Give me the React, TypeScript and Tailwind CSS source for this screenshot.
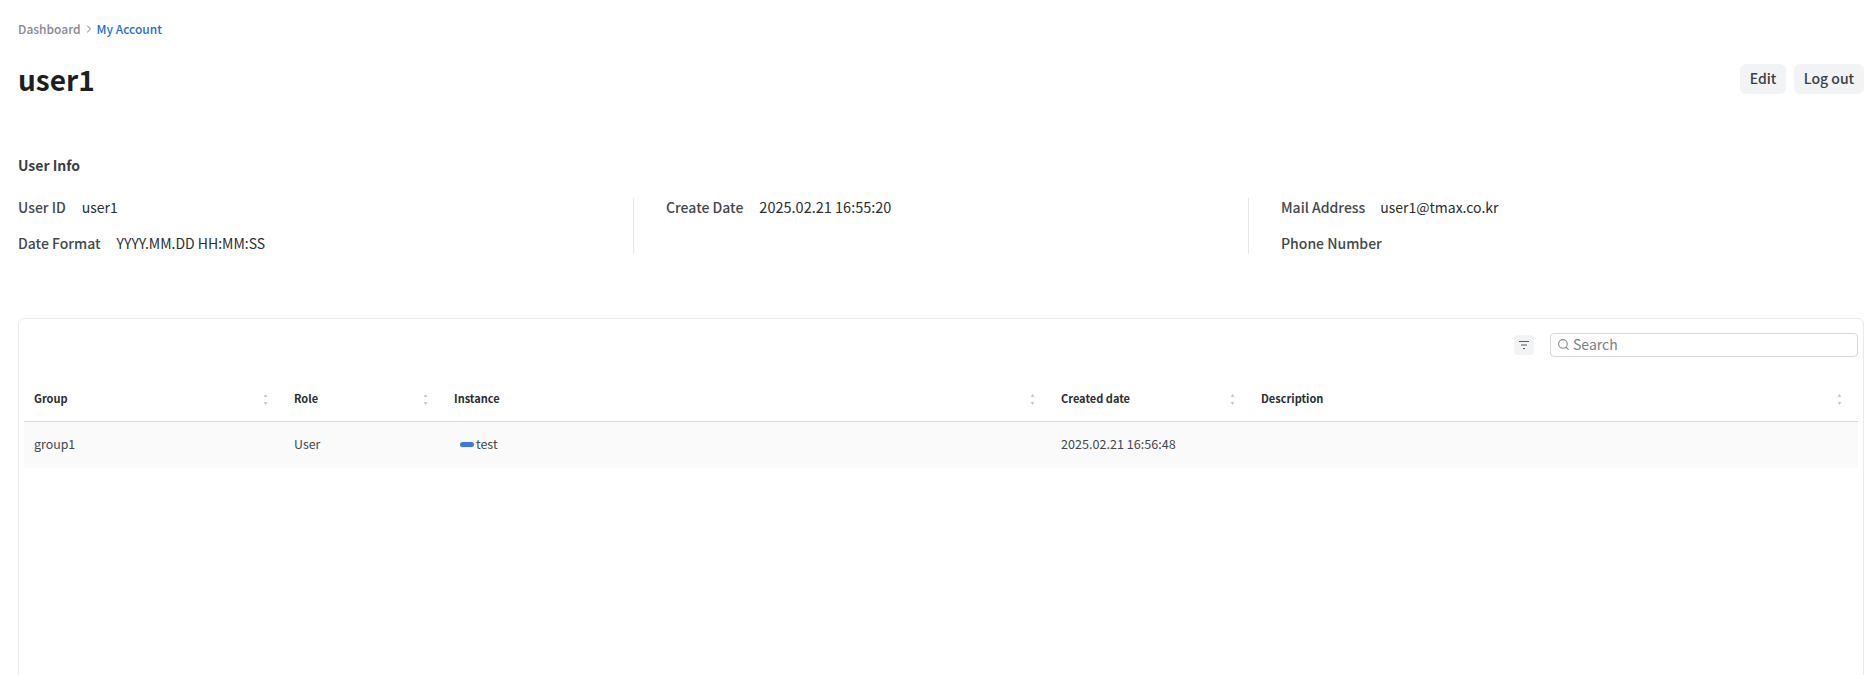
import { ChevronRight, Search } from "lucide-react";

const font = { fontFamily: '"Noto Sans CJK KR", "Noto Sans", sans-serif' };

const SortIcon = () => (
  <svg width="7" height="13" viewBox="0 0 7 13" className="shrink-0">
    <path d="M3.5 1 L5.5 4 H1.5 Z" fill="#c4c6ca" />
    <path d="M3.5 12 L5.5 9 H1.5 Z" fill="#c4c6ca" />
  </svg>
);

const columns = [
  { name: "Group", width: "w-[260px]" },
  { name: "Role", width: "w-[160px]" },
  { name: "Instance", width: "w-[607px]" },
  { name: "Created date", width: "w-[200px]" },
  { name: "Description", width: "flex-1" },
];

const InfoItem = ({ label, value, date }: { label: string; value?: string; date?: boolean }) => (
  <div className="flex h-[18px] items-center gap-4 text-[14px]">
    <span className="font-medium text-[#44474c]">{label}</span>
    {value && <span className={date ? "text-[14.5px] text-[#2b2d31]" : "text-[#2b2d31]"}>{value}</span>}
  </div>
);

const App = () => {
  return (
    <div className="h-[675px] overflow-hidden bg-white pl-[18px] pr-3" style={font}>
      <div className="mt-[19px] flex h-5 items-center text-[12px] font-medium">
        <span className="text-[#868a91]">Dashboard</span>
        <ChevronRight size={12} className="mx-[2px] text-[#6f7379]" />
        <span className="text-[#1f6fd1]">My Account</span>
      </div>

      <div className="mt-[18px] flex items-start justify-between">
        <h1 className="text-[28px] leading-[44px] font-bold text-[#1c1e21]">user1</h1>
        <div className="flex gap-[8px] pt-[7px]">
          <button className="h-[30px] w-[46px] rounded-md bg-[#f2f3f5] pb-[1px] text-[14px] font-medium text-[#3a3d42]">Edit</button>
          <button className="h-[30px] w-[70px] rounded-md bg-[#f2f3f5] pb-[1px] text-[14px] font-medium text-[#3a3d42]">Log out</button>
        </div>
      </div>

      <h2 className="mt-[54px] text-[14px] leading-5 font-bold text-[#3a3d42]">User Info</h2>

      <div className="mt-[23px] flex h-[56px]">
        <div className="flex w-[616px] flex-col gap-[18px] border-r border-[#e6e7ea]">
          <InfoItem label="User ID" value="user1" />
          <InfoItem label="Date Format" value="YYYY.MM.DD HH:MM:SS" />
        </div>
        <div className="flex w-[615px] flex-col gap-[18px] border-r border-[#e6e7ea] pl-8">
          <InfoItem label="Create Date" value="2025.02.21 16:55:20" date />
        </div>
        <div className="flex flex-1 flex-col gap-[18px] pl-8">
          <div className="flex h-[18px] items-center gap-[15px] text-[14px]">
            <span className="font-medium text-[#44474c]">Mail Address</span>
            <span className="text-[#2b2d31]">user1@tmax.co.kr</span>
          </div>
          <InfoItem label="Phone Number" />
        </div>
      </div>

      <div className="mt-[64px] h-[500px] rounded-md border border-[#e8e9eb] px-[5px]">
        <div className="flex h-[59px] items-start justify-end pt-[14px]">
          <button className="mt-[2px] flex h-5 w-5 items-center justify-center rounded bg-[#f2f3f5]">
            <svg width="12" height="10" viewBox="0 0 12 10" fill="none" stroke="#55585e" strokeWidth="1">
              <path d="M1 1.5 H11 M3 5 H9 M5 8.5 H7" />
            </svg>
          </button>
          <div className="ml-4 flex h-[24px] w-[308px] items-center gap-[3px] rounded border border-[#d5d7da] pb-[1px] pl-[6px]">
            <Search size={13} className="text-[#85888e]" />
            <span className="text-[14px] text-[#7b7e84]">Search</span>
          </div>
        </div>

        <div className="flex h-[44px] border-b border-[#d5d7da]">
          {columns.map((col) => (
            <div key={col.name} className={`flex items-center justify-between pl-[10px] pr-[15px] ${col.width}`}>
              <span className="pb-[2px] text-[11px] font-bold text-[#2b2d31]">{col.name}</span>
              <SortIcon />
            </div>
          ))}
        </div>

        <div className="flex h-[46px] items-center bg-[#fafafa] text-[12.4px] text-[#44474c]">
          <div className="w-[260px] pb-[2px] pl-[10px]">group1</div>
          <div className="w-[160px] pb-[2px] pl-[10px]">User</div>
          <div className="flex w-[607px] items-center pl-[16px]">
            <span className="h-[5px] w-[14px] rounded-full bg-[#3b78e7]" />
            <span className="ml-[2px] pb-[2px]">test</span>
          </div>
          <div className="w-[200px] pb-[2px] pl-[10px] text-[12.6px]">2025.02.21 16:56:48</div>
        </div>
      </div>
    </div>
  );
};

export default App;
